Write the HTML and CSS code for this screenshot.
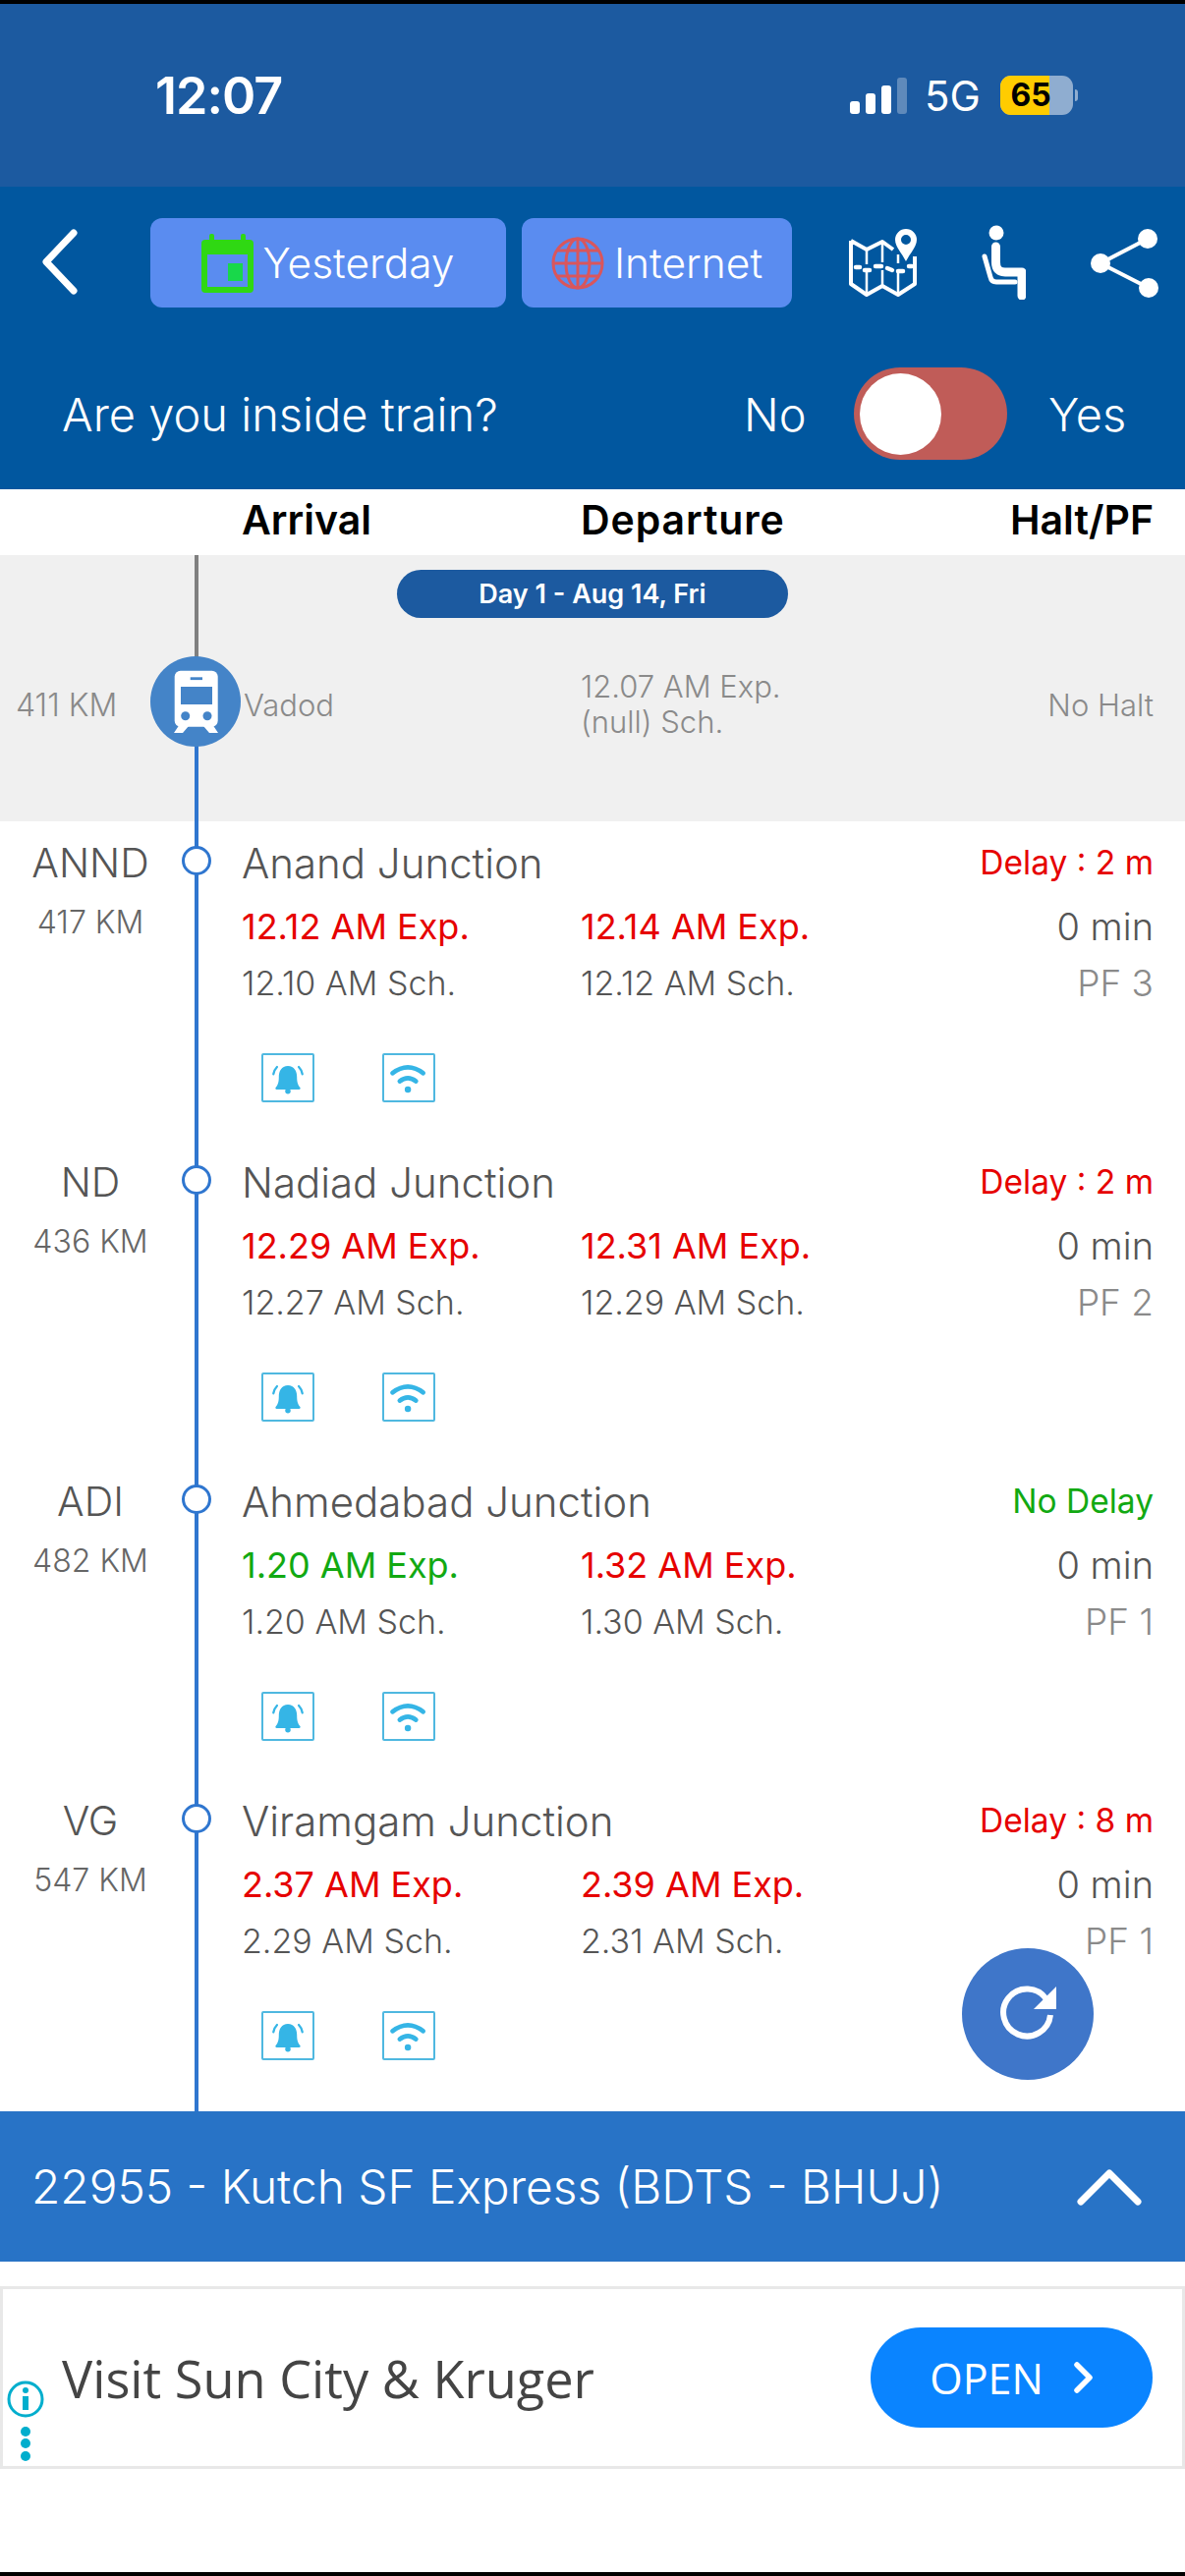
FILE: index.html
```html
<!DOCTYPE html>
<html lang="en">
<head>
    <meta charset="UTF-8">
    <meta name="viewport" content="width=device-width, initial-scale=1.0">
    <title>22955 - Kutch SF Express</title>
    <link rel="stylesheet" href="styles.css">
</head>
<body>
    <svg class="defs" width="0" height="0">
        <symbol id="bell" viewBox="0 0 54 50">
            <path d="M27 12c-7 0-10 6-10 12 0 6-1 9-3.500 12-.8 1 0 2 1 2h25c1 0 1.800-1 1-2-2.500-3-3.500-6-3.500-12 0-6-3-12-10-12z" fill="#35b5e6"/>
            <circle cx="27" cy="40" r="3" fill="#35b5e6"/>
            <path d="M11 21q1-5 4-8M43 21q-1-5-4-8" fill="none" stroke="#35b5e6" stroke-width="2.500" stroke-linecap="round"/>
        </symbol>
        <symbol id="wifi" viewBox="0 0 54 50">
            <path d="M9 20q17-13 34 0M17 29q9-7 18 0" fill="none" stroke="#35b5e6" stroke-width="5" stroke-linecap="round"/>
            <circle cx="26" cy="38" r="3.500" fill="#35b5e6"/>
        </symbol>
    </svg>

    <div class="status-bar">
        <span class="clock">12:07</span>
        <div class="status-right">
            <svg class="signal" width="58" height="37" viewBox="0 0 58 37">
                <rect x="0" y="24" width="10" height="13" rx="3" fill="#fff"/>
                <rect x="16" y="16" width="10" height="21" rx="3" fill="#fff"/>
                <rect x="32" y="8" width="10" height="29" rx="3" fill="#fff"/>
                <rect x="48" y="0" width="10" height="37" rx="3" fill="#5f8abb"/>
            </svg>
            <span class="network">5G</span>
            <div class="battery"><div class="battery-fill"></div><span class="battery-num">65</span></div>
            <div class="battery-nub"></div>
        </div>
    </div>

    <div class="header">
        <div class="tool-row">
            <svg class="back" width="39" height="67" viewBox="0 0 39 67"><path d="M33 4 5 33.500 33 63" fill="none" stroke="#fff" stroke-width="7" stroke-linecap="round" stroke-linejoin="round"/></svg>
            <div class="tool-btn btn-day">
                <svg width="53" height="60" viewBox="0 0 53 60">
                    <rect x="8" y="0" width="5" height="10" rx="2" fill="#2fd813"/>
                    <rect x="40" y="0" width="5" height="10" rx="2" fill="#2fd813"/>
                    <rect x="0" y="6" width="53" height="54" rx="4" fill="#2fd813"/>
                    <rect x="6" y="21" width="41" height="33" fill="#5a8cf0"/>
                    <rect x="27" y="30" width="15" height="18" fill="#18d84a"/>
                </svg>
                <span>Yesterday</span>
            </div>
            <div class="tool-btn btn-net">
                <svg width="54" height="54" viewBox="0 0 54 54">
                    <g fill="none" stroke="#d9565c" stroke-width="3">
                        <circle cx="27" cy="27" r="25"/>
                        <ellipse cx="27" cy="27" rx="12" ry="25"/>
                        <path d="M27 2v50M2 27h50M6 14h42M6 40h42"/>
                    </g>
                </svg>
                <span>Internet</span>
            </div>
            <svg class="icon-map" width="70" height="70" viewBox="0 0 70 70">
                <path d="M2 12 18 21 34 13 45 21M67 28V56L50 67 34 58 18 67 2 56V12" fill="none" stroke="#fff" stroke-width="4" stroke-linejoin="round"/>
                <path d="M18 21V36M18 44V67M34 13V34M34 42V58M50 44V67M50 26V35" fill="none" stroke="#fff" stroke-width="2.500"/>
                <path d="M7 39h4M16 42h5M27 38h6M39 40l5 2M50 43h5M61 38h3" fill="none" stroke="#fff" stroke-width="4.500" stroke-linecap="round"/>
                <path fill-rule="evenodd" d="M58 0a11 11 0 0 1 11 11c0 7-7 14-11 22-4-8-11-15-11-22A11 11 0 0 1 58 0zm0 6a5 5 0 1 0 0 10 5 5 0 0 0 0-10z" fill="#fff"/>
            </svg>
            <svg class="icon-seat" width="45" height="76" viewBox="0 0 45 76">
                <circle cx="15" cy="8" r="7.500" fill="#fff"/>
                <path d="M14.500 22V38Q14.500 48 24 48H41V72" fill="none" stroke="#fff" stroke-width="9" stroke-linecap="round" stroke-linejoin="round"/>
                <path d="M3 32 9 53Q10 58 15 58H34" fill="none" stroke="#fff" stroke-width="5" stroke-linecap="round"/>
            </svg>
            <svg class="icon-share" width="69" height="70" viewBox="0 0 69 70">
                <path d="M58 10 10 35 59 60" fill="none" stroke="#fff" stroke-width="4"/>
                <circle cx="58" cy="10" r="10" fill="#fff"/>
                <circle cx="10" cy="35" r="10" fill="#fff"/>
                <circle cx="59" cy="60" r="10" fill="#fff"/>
            </svg>
        </div>
        <div class="inside-row">
            <span class="inside-q">Are you inside train?</span>
            <span class="inside-no">No</span>
            <div class="toggle"><div class="thumb"></div></div>
            <span class="inside-yes">Yes</span>
        </div>
    </div>

    <div class="col-head">
        <span class="col-arr">Arrival</span>
        <span class="col-dep">Departure</span>
        <span class="col-right">Halt/PF</span>
    </div>

    <div class="stops">
        <div class="current">
            <div class="day-pill">Day 1 - Aug 14, Fri</div>
            <div class="current-row">
                <span class="cur-km">411 KM</span>
                <div class="train-dot">
                    <svg width="92" height="92" viewBox="0 0 92 92">
                        <circle cx="46" cy="46" r="46" fill="#4484c8"/>
                        <rect x="24.700" y="14.700" width="44" height="57" rx="6" fill="#fff"/>
                        <path d="M30 69 24 78H33L39 71H54L60 78H69L63 69z" fill="#fff"/>
                        <rect x="31" y="31" width="32" height="18" fill="#4484c8"/>
                        <rect x="40.700" y="21.300" width="12.300" height="2.800" fill="#4484c8"/>
                        <circle cx="35.700" cy="60.700" r="4.500" fill="#4484c8"/>
                        <circle cx="58" cy="60.700" r="4.500" fill="#4484c8"/>
                    </svg>
                </div>
                <span class="cur-name">Vadod</span>
                <div class="cur-times">12.07 AM Exp.<br>(null) Sch.</div>
                <span class="cur-halt">No Halt</span>
            </div>
        </div>

        <div class="stop">
            <div class="code"><div class="code-name">ANND</div><div class="code-km">417 KM</div></div>
            <div class="node"></div>
            <div class="name">Anand Junction</div>
            <div class="delay late">Delay : 2 m</div>
            <div class="exp col-arr late">12.12 AM Exp.</div>
            <div class="exp col-dep late">12.14 AM Exp.</div>
            <div class="halt col-right">0 min</div>
            <div class="sch col-arr">12.10 AM Sch.</div>
            <div class="sch col-dep">12.12 AM Sch.</div>
            <div class="pf col-right">PF 3</div>
            <div class="alerts">
                <svg class="alert"><use href="#bell"/></svg>
                <svg class="alert"><use href="#wifi"/></svg>
            </div>
        </div>

        <div class="stop">
            <div class="code"><div class="code-name">ND</div><div class="code-km">436 KM</div></div>
            <div class="node"></div>
            <div class="name">Nadiad Junction</div>
            <div class="delay late">Delay : 2 m</div>
            <div class="exp col-arr late">12.29 AM Exp.</div>
            <div class="exp col-dep late">12.31 AM Exp.</div>
            <div class="halt col-right">0 min</div>
            <div class="sch col-arr">12.27 AM Sch.</div>
            <div class="sch col-dep">12.29 AM Sch.</div>
            <div class="pf col-right">PF 2</div>
            <div class="alerts">
                <svg class="alert"><use href="#bell"/></svg>
                <svg class="alert"><use href="#wifi"/></svg>
            </div>
        </div>

        <div class="stop">
            <div class="code"><div class="code-name">ADI</div><div class="code-km">482 KM</div></div>
            <div class="node"></div>
            <div class="name">Ahmedabad Junction</div>
            <div class="delay ontime">No Delay</div>
            <div class="exp col-arr ontime">1.20 AM Exp.</div>
            <div class="exp col-dep late">1.32 AM Exp.</div>
            <div class="halt col-right">0 min</div>
            <div class="sch col-arr">1.20 AM Sch.</div>
            <div class="sch col-dep">1.30 AM Sch.</div>
            <div class="pf col-right">PF 1</div>
            <div class="alerts">
                <svg class="alert"><use href="#bell"/></svg>
                <svg class="alert"><use href="#wifi"/></svg>
            </div>
        </div>

        <div class="stop">
            <div class="code"><div class="code-name">VG</div><div class="code-km">547 KM</div></div>
            <div class="node"></div>
            <div class="name">Viramgam Junction</div>
            <div class="delay late">Delay : 8 m</div>
            <div class="exp col-arr late">2.37 AM Exp.</div>
            <div class="exp col-dep late">2.39 AM Exp.</div>
            <div class="halt col-right">0 min</div>
            <div class="sch col-arr">2.29 AM Sch.</div>
            <div class="sch col-dep">2.31 AM Sch.</div>
            <div class="pf col-right">PF 1</div>
            <div class="alerts">
                <svg class="alert"><use href="#bell"/></svg>
                <svg class="alert"><use href="#wifi"/></svg>
            </div>
        </div>

        <div class="refresh">
            <svg width="134" height="134" viewBox="0 0 134 134">
                <path d="M86 52A24 24 0 1 0 90 68" fill="none" stroke="#fff" stroke-width="6"/>
                <path d="M96 39V62H73z" fill="#fff"/>
            </svg>
        </div>
    </div>

    <div class="train-bar">
        <span>22955 - Kutch SF Express (BDTS - BHUJ)</span>
        <svg width="66" height="38" viewBox="0 0 66 38"><path d="M4 34 33 5 62 34" fill="none" stroke="#fff" stroke-width="7" stroke-linecap="round" stroke-linejoin="round"/></svg>
    </div>

    <div class="ad">
        <div class="ad-info">
            <svg width="38" height="90" viewBox="0 0 38 90">
                <circle cx="19" cy="19" r="17" fill="none" stroke="#00aecd" stroke-width="3"/>
                <circle cx="19" cy="10" r="3" fill="#00aecd"/>
                <rect x="16" y="16" width="6" height="14" fill="#00aecd"/>
                <circle cx="19" cy="52" r="5" fill="#00aecd"/>
                <circle cx="19" cy="64" r="5" fill="#00aecd"/>
                <circle cx="19" cy="77" r="5" fill="#00aecd"/>
            </svg>
        </div>
        <span class="ad-text">Visit Sun City &amp; Kruger</span>
        <div class="ad-btn">
            <span>OPEN</span>
            <svg width="21" height="34" viewBox="0 0 21 34"><path d="M4 4 17 17 4 30" fill="none" stroke="#fff" stroke-width="5.500" stroke-linecap="round" stroke-linejoin="round"/></svg>
        </div>
    </div>
</body>
</html>
```

FILE: styles.css
```css
html, body {
    margin: 0;
    padding: 0;
}
body {
    width: 1206px;
    height: 2622px;
    box-sizing: border-box;
    border-top: 4px solid #000;
    border-bottom: 4px solid #000;
    background-color: #fff;
    font-family: Inter, Roboto, sans-serif;
    overflow: hidden;
}
.defs {
    position: absolute;
}
svg {
    display: block;
    flex: none;
}

/* status bar */
.status-bar {
    height: 186px;
    background-color: #1c5aa0;
    color: #fff;
    display: flex;
    align-items: flex-start;
}
.clock {
    margin: 62px 0 0 158px;
    width: 128px;
    font-size: 52px;
    line-height: 64px;
    font-weight: 600;
    letter-spacing: -1px;
    white-space: nowrap;
}
.status-right {
    margin: 73px 0 0 579px;
    display: flex;
    align-items: center;
    height: 40px;
}
.network {
    margin-left: 18px;
    font-size: 42px;
    font-weight: 400;
    width: 57px;
}
.battery {
    margin-left: 20px;
    width: 74px;
    height: 40px;
    border-radius: 11px;
    background-color: #8fadd0;
    overflow: hidden;
    position: relative;
}
.battery-fill {
    width: 50px;
    height: 40px;
    background-color: #ffcc00;
}
.battery-num {
    position: absolute;
    left: 0;
    top: 0;
    width: 62px;
    text-align: center;
    color: #000;
    font-size: 32px;
    font-weight: 700;
    line-height: 40px;
}
.battery-nub {
    margin-left: 2px;
    width: 3px;
    height: 12px;
    border-radius: 0 3px 3px 0;
    background-color: #8fadd0;
}

/* header */
.header {
    height: 308px;
    box-sizing: border-box;
    background-color: #01579f;
    color: #fff;
    padding-top: 32px;
}
.tool-row {
    display: flex;
    align-items: flex-start;
    height: 91px;
}
.back {
    margin: 11px 0 0 42px;
}
.tool-btn {
    height: 91px;
    box-sizing: border-box;
    border-radius: 12px;
    background-color: #5a8cf0;
    display: flex;
    align-items: center;
    justify-content: center;
    font-size: 42.500px;
    font-weight: 300;
}
.btn-day {
    width: 362px;
    margin-left: 72px;
    gap: 9px;
}
.btn-net {
    width: 275px;
    margin-left: 16px;
    gap: 10px;
}
.icon-map {
    margin: 11px 0 0 58px;
}
.icon-seat {
    margin: 7px 0 0 65px;
}
.icon-share {
    margin: 11px 0 0 66px;
}
.inside-row {
    margin-top: 61px;
    height: 94px;
    display: flex;
    align-items: center;
    font-size: 47px;
    font-weight: 300;
}
.inside-q {
    margin-left: 63px;
    width: 694px;
}
.inside-no {
    width: 112px;
}
.inside-yes {
    margin-left: 42px;
}
.toggle {
    width: 156px;
    height: 94px;
    border-radius: 47px;
    background-color: #c05c58;
    box-sizing: border-box;
    padding: 6px;
}
.thumb {
    width: 83px;
    height: 83px;
    border-radius: 50%;
    background-color: #fff;
}

/* shared columns of the timetable */
.col-head, .stop {
    display: grid;
    grid-template-columns: 184px 62px 345px 345px 1fr;
    padding-right: 32px;
    align-items: center;
}
.col-arr {
    grid-column: 3;
}
.col-dep {
    grid-column: 4;
}
.col-right {
    grid-column: 5;
    text-align: right;
}
.col-head {
    height: 67px;
    box-sizing: border-box;
    padding-bottom: 5px;
    font-size: 41px;
    font-weight: 600;
    color: #000;
}
.col-head .col-dep {
    letter-spacing: 0.9px;
}

/* timeline */
.stops {
    position: relative;
    height: 1584px;
}
.stops::before {
    content: "";
    position: absolute;
    left: 198px;
    top: 0;
    width: 4px;
    height: 100%;
    background: linear-gradient(#808080 0, #808080 110px, #2f76cf 110px);
}
.current {
    height: 271px;
    box-sizing: border-box;
    padding-top: 15px;
    background-color: #f0f0f0;
    color: #8a8a8a;
    font-size: 31px;
    font-weight: 300;
}
.day-pill {
    width: 398px;
    height: 49px;
    margin: 0 auto;
    border-radius: 25px;
    background-color: #1c5aa0;
    color: #fff;
    font-size: 27px;
    font-weight: 600;
    line-height: 49px;
    text-align: center;
    position: relative;
}
.current-row {
    margin-top: 39px;
    height: 92px;
    display: grid;
    grid-template-columns: 153px 95px 343px 345px 1fr;
    padding-right: 32px;
    align-items: center;
}
.cur-km {
    padding: 6px 0 0 16px;
    font-size: 32px;
}
.train-dot {
    position: relative;
    width: 92px;
    height: 92px;
}
.cur-name {
    padding-top: 6px;
}
.cur-times {
    line-height: 36px;
    padding-top: 6px;
}
.cur-halt {
    padding-top: 6px;
    text-align: right;
}
.stop {
    height: 325px;
    box-sizing: border-box;
    padding-top: 10px;
    grid-template-rows: 64px 66px 48px auto;
    align-content: start;
}
.code {
    grid-column: 1;
    grid-row: 1 / 4;
    align-self: start;
    text-align: center;
}
.code-name {
    font-size: 41px;
    font-weight: 300;
    line-height: 64px;
    color: #555;
}
.code-km {
    font-size: 32px;
    font-weight: 300;
    line-height: 58px;
    color: #666;
}
.node {
    grid-row: 1;
    grid-column: 2;
    position: relative;
    width: 30px;
    height: 30px;
    margin: -4px 0 0 1px;
    box-sizing: border-box;
    border: 3px solid #2f76cf;
    border-radius: 50%;
    background-color: #fff;
}
.name {
    grid-column: 3 / 5;
    grid-row: 1;
    font-size: 42px;
    font-weight: 300;
    color: #555;
}
.delay {
    grid-column: 5;
    grid-row: 1;
    text-align: right;
    font-size: 33.500px;
    white-space: nowrap;
}
.exp {
    grid-row: 2;
    font-size: 36px;
    white-space: nowrap;
}
.sch {
    grid-row: 3;
    font-size: 34px;
    font-weight: 300;
    color: #555;
    white-space: nowrap;
}
.halt {
    grid-row: 2;
    font-size: 38px;
    font-weight: 300;
    color: #555;
}
.pf {
    grid-row: 3;
    font-size: 37px;
    font-weight: 300;
    color: #8a8a8a;
}
.late {
    color: #e60000;
}
.ontime {
    color: #12a912;
}
.alerts {
    grid-column: 3 / 5;
    grid-row: 4;
    margin: 48px 0 0 20px;
    display: flex;
    gap: 69px;
}
.alert {
    width: 54px;
    height: 50px;
    box-sizing: border-box;
    border: 2px solid #4fb8e0;
    border-radius: 2px;
}
.refresh {
    position: absolute;
    left: 979px;
    top: 1418px;
    width: 134px;
    height: 134px;
    border-radius: 50%;
    background-color: #3f76c9;
}

/* bottom bar */
.train-bar {
    height: 153px;
    box-sizing: border-box;
    padding: 0 44px 0 32px;
    background-color: #2873c6;
    color: #fff;
    display: flex;
    align-items: center;
    justify-content: space-between;
    font-size: 47.800px;
    font-weight: 300;
}

/* ad */
.ad {
    position: relative;
    margin-top: 25px;
    height: 186px;
    box-sizing: border-box;
    border: 3px solid #e8e8e8;
    display: flex;
    align-items: center;
    font-family: "Open Sans", sans-serif;
}
.ad-info {
    position: absolute;
    left: 4px;
    top: 93px;
}
.ad-text {
    margin-left: 60px;
    font-size: 52.300px;
    color: #444;
    width: 823px;
    white-space: nowrap;
}
.ad-btn {
    width: 287px;
    height: 102px;
    border-radius: 51px;
    background-color: #0a84ff;
    color: #fff;
    display: flex;
    align-items: center;
    justify-content: center;
    gap: 30px;
    font-size: 43px;
}
```
